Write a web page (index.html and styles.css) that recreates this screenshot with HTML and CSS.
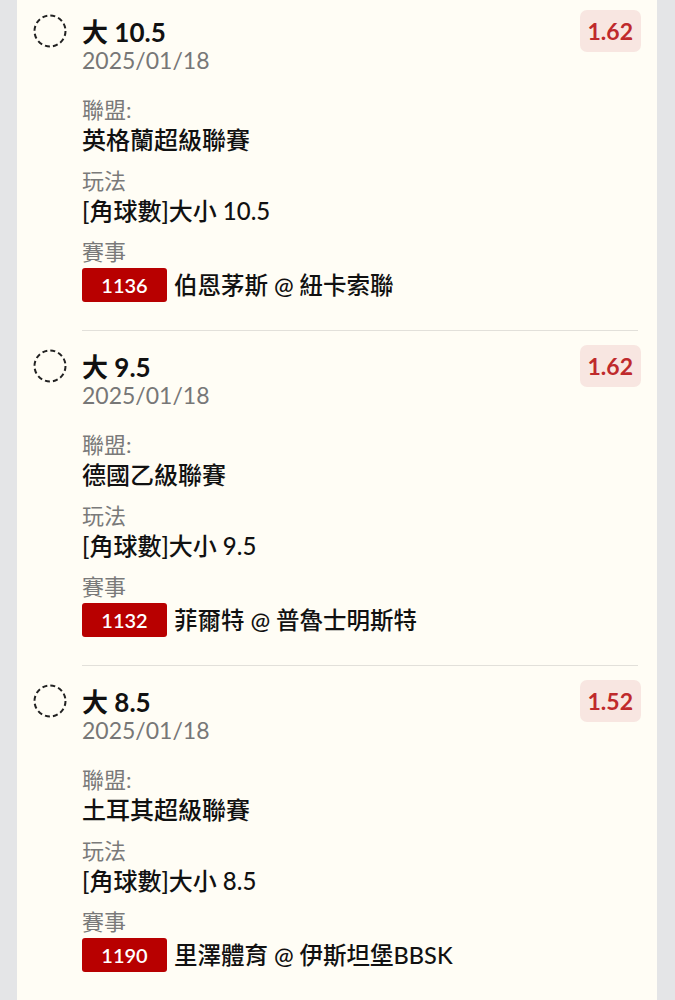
FILE: index.html
```html
<!DOCTYPE html>
<html>
<head>
  <meta charset="utf-8">
  <meta name="viewport" content="width=device-width, initial-scale=1.0"/>
  <title>注單</title>
  <link rel="stylesheet" href="styles.css">
</head>
<body>

  <div class="card">

    <div class="bet">
      <svg class="pick" width="34" height="34" viewBox="0 0 34 34"><circle cx="17" cy="17" r="15.5"/></svg>
      <div class="bet-body">
        <div class="bet-head">
          <div>
            <div class="bet-title">大 10.5</div>
            <div class="bet-date">2025/01/18</div>
          </div>
          <div class="odds">1.62</div>
        </div>
        <div class="field">
          <div class="label">聯盟:</div>
          <div class="value">英格蘭超級聯賽</div>
        </div>
        <div class="field">
          <div class="label">玩法</div>
          <div class="value">[角球數]大小 10.5</div>
        </div>
        <div class="field">
          <div class="label">賽事</div>
          <div class="match"><span class="match-no">1136</span>伯恩茅斯 @ 紐卡索聯</div>
        </div>
      </div>
    </div>

    <div class="bet">
      <svg class="pick" width="34" height="34" viewBox="0 0 34 34"><circle cx="17" cy="17" r="15.5"/></svg>
      <div class="bet-body">
        <div class="bet-head">
          <div>
            <div class="bet-title">大 9.5</div>
            <div class="bet-date">2025/01/18</div>
          </div>
          <div class="odds">1.62</div>
        </div>
        <div class="field">
          <div class="label">聯盟:</div>
          <div class="value">德國乙級聯賽</div>
        </div>
        <div class="field">
          <div class="label">玩法</div>
          <div class="value">[角球數]大小 9.5</div>
        </div>
        <div class="field">
          <div class="label">賽事</div>
          <div class="match"><span class="match-no">1132</span>菲爾特 @ 普魯士明斯特</div>
        </div>
      </div>
    </div>

    <div class="bet">
      <svg class="pick" width="34" height="34" viewBox="0 0 34 34"><circle cx="17" cy="17" r="15.5"/></svg>
      <div class="bet-body">
        <div class="bet-head">
          <div>
            <div class="bet-title">大 8.5</div>
            <div class="bet-date">2025/01/18</div>
          </div>
          <div class="odds">1.52</div>
        </div>
        <div class="field">
          <div class="label">聯盟:</div>
          <div class="value">土耳其超級聯賽</div>
        </div>
        <div class="field">
          <div class="label">玩法</div>
          <div class="value">[角球數]大小 8.5</div>
        </div>
        <div class="field">
          <div class="label">賽事</div>
          <div class="match"><span class="match-no">1190</span>里澤體育 @ 伊斯坦堡BBSK</div>
        </div>
      </div>
    </div>

  </div>

</body>
</html>
```

FILE: styles.css
```css
body {
  margin: 0;
  padding: 0 18px 0 17px;
  background: #e4e5e7;
  font-family: Lato, "Noto Sans CJK TC", sans-serif;
  color: #111;
}
.card {
  background: #fffdf5;
  margin-top: -4px;
  padding: 0 16px;
  min-height: 1010px;
}
.bet {
  display: flex;
  gap: 15px;
}
.pick {
  flex: none;
  margin-top: 18px;
}
.pick circle {
  fill: none;
  stroke: #222;
  stroke-width: 2;
  stroke-dasharray: 5 3.1;
}
.bet-body {
  flex: 1;
  margin-right: 3px;
  padding: 22px 0 28px;
  border-bottom: 1px solid #e2e0da;
}
.bet-head {
  display: flex;
  justify-content: space-between;
  align-items: flex-start;
}
.bet-title {
  font-size: 26px;
  font-weight: 700;
  line-height: 28px;
}
.bet-date {
  font-size: 23px;
  line-height: 28px;
  color: #777;
}
.odds {
  margin: -8px -3px 0 0;
  padding: 0 8px;
  height: 42px;
  line-height: 42px;
  border-radius: 7px;
  background: #f8e6e1;
  color: #bf2a2c;
  font-size: 23px;
  font-weight: 700;
}
.field {
  margin-top: 11px;
}
.field:nth-child(2) {
  margin-top: 21px;
}
.label {
  font-size: 22px;
  line-height: 30px;
  color: #7a7a7a;
}
.value {
  font-size: 24px;
  line-height: 30px;
  font-weight: 500;
}
.match {
  display: flex;
  align-items: center;
  gap: 7px;
  height: 34px;
  margin-top: 1px;
  font-size: 23.5px;
  line-height: 34px;
  font-weight: 500;
}
.match-no {
  width: 85px;
  height: 34px;
  line-height: 34px;
  border-radius: 3px;
  background: #b80000;
  color: #fff;
  text-align: center;
  font-size: 20px;
  font-weight: 600;
}
```
